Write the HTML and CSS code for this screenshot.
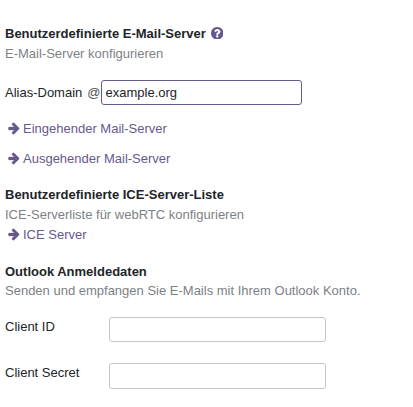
FILE: index.html
```html
<!DOCTYPE html>
<html lang="de">
<head>
<meta charset="utf-8">
<title>Einstellungen</title>
<link rel="stylesheet" href="styles.css">
</head>
<body>
<svg class="defs" width="0" height="0" aria-hidden="true">
  <symbol id="arrow" viewBox="0 64 1536 1792"><path fill="currentColor" stroke="currentColor" stroke-width="50" d="M1472 960q0 54-37 91l-651 651q-39 37-91 37-51 0-90-37l-75-75q-38-38-38-91t38-91l293-293h-704q-52 0-84.500-37.500t-32.500-90.500v-128q0-53 32.500-90.500t84.500-37.500h704l-293-294q-38-36-38-90t38-90l75-75q38-38 90-38 53 0 91 38l651 651q37 35 37 90z"/></symbol>
</svg>
<main class="settings">
  <section class="mail">
    <h2>Benutzerdefinierte E-Mail-Server
      <svg class="help" viewBox="128 128 1536 1536"><path fill="currentColor" d="M1024 1376v-192q0-14-9-23t-23-9h-192q-14 0-23 9t-9 23v192q0 14 9 23t23 9h192q14 0 23-9t9-23zm256-672q0-88-55.500-163t-138.500-116-170-41q-243 0-371 213-15 24 8 42l132 100q7 6 19 6 16 0 25-12 53-68 86-92 34-24 86-24 48 0 85.500 26t37.500 59q0 38-20 61t-68 45q-63 28-115.500 86.500t-52.500 125.500v36q0 14 9 23t23 9h192q14 0 23-9t9-23q0-19 21.500-49.500t54.500-49.500q32-18 49-28.500t46-35 44.500-48 28-60.500 12.500-81zm384 192q0 209-103 385.500t-279.500 279.500-385.500 103-385.500-103-279.500-279.500-103-385.500 103-385.500 279.500-279.500 385.500-103 385.500 103 279.500 279.500 103 385.500z"/></svg>
    </h2>
    <p>E-Mail-Server konfigurieren</p>
    <div class="alias"><label for="domain">Alias-Domain</label><span class="at">@</span><input id="domain" value="example.org"></div>
    <a class="link" href="#"><svg><use href="#arrow"/></svg>Eingehender Mail-Server</a>
    <a class="link" href="#"><svg><use href="#arrow"/></svg>Ausgehender Mail-Server</a>
  </section>
  <section class="ice">
    <h2>Benutzerdefinierte ICE-Server-Liste</h2>
    <p>ICE-Serverliste für webRTC konfigurieren</p>
    <a class="link" href="#"><svg><use href="#arrow"/></svg>ICE Server</a>
  </section>
  <section class="outlook">
    <h2>Outlook Anmeldedaten</h2>
    <p>Senden und empfangen Sie E-Mails mit Ihrem Outlook Konto.</p>
    <div class="field"><label for="cid">Client ID</label><input id="cid"></div>
    <div class="field"><label for="secret">Client Secret</label><input id="secret"></div>
  </section>
</main>
</body>
</html>
```
FILE: styles.css
```css
* { box-sizing: border-box; }
body { margin: 0; background: #fff; color: #212529; font: 13px/20px "Liberation Sans", Arial, sans-serif; }
.defs { display: block; }
.settings { padding: 24px 5px 0; }
h2 { display: flex; align-items: center; gap: 5px; margin: 0; height: 20px; font-size: 13px; line-height: 20px; }
.help { width: 12.5px; height: 12.5px; margin-top: -2px; color: #66588d; }
p { margin: 0; color: #7c8186; }
.alias { display: flex; align-items: center; height: 25px; margin: 16px 0 14px; }
.at { margin: 0 0 0 5px; color: #495057; }
input { font: inherit; color: inherit; border: 1px solid #c4c6c8; border-radius: 3px; padding: 0 4px; background: #fff; outline: none; }
.alias input { width: 201px; height: 25px; border-color: #66598f; }
.link { display: flex; align-items: center; height: 20px; padding-left: 3px; color: #66588d; text-decoration: none; }
.link svg { width: 12px; height: 13px; margin: -1px 3px 0 0; }
.mail .link + .link { margin-top: 10px; }
.ice { margin-top: 16px; }
.outlook { margin-top: 17px; }
.outlook p { height: 19px; line-height: 18px; }
.field { display: flex; height: 25px; margin-top: 16px; }
.field + .field { height: 26px; margin-top: 21px; }
.field label { width: 104px; }
.field input { width: 217px; }
```
